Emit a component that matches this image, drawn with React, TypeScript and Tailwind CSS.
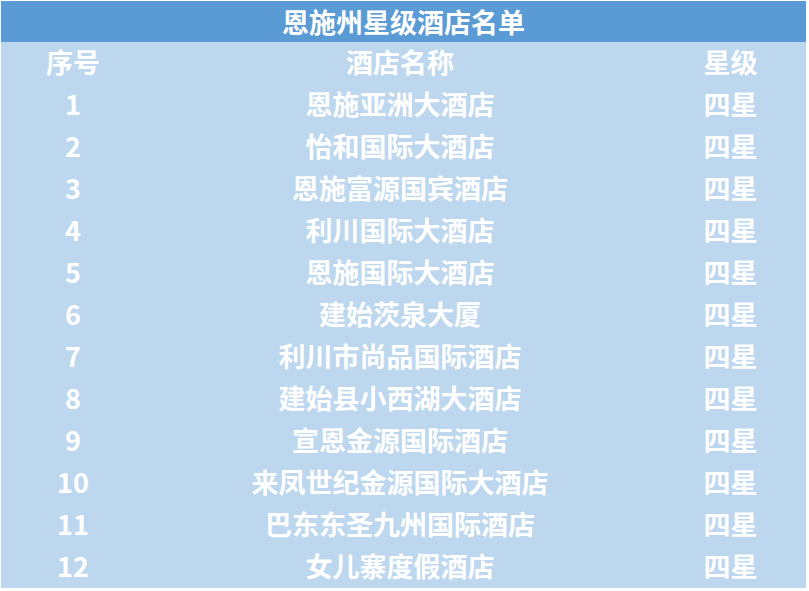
import React from 'react';

const hotels: string[] = [
    '恩施亚洲大酒店',
    '怡和国际大酒店',
    '恩施富源国宾酒店',
    '利川国际大酒店',
    '恩施国际大酒店',
    '建始茨泉大厦',
    '利川市尚品国际酒店',
    '建始县小西湖大酒店',
    '宣恩金源国际酒店',
    '来凤世纪金源国际大酒店',
    '巴东东圣九州国际酒店',
    '女儿寨度假酒店',
];

const App: React.FC = () => {
    return (
        <div className="w-[809px] h-[591px] bg-white pl-[1px] pt-[1px]">
            <div
                className="w-[805px] bg-[#bdd7ee] text-white font-bold text-[27px] leading-none"
                style={{fontFamily: '"Noto Sans CJK SC", "Noto Sans", sans-serif'}}
            >
                <div className="h-[41px] bg-[#5b9bd5] flex items-center justify-center">
                    恩施州星级酒店名单
                </div>
                <div className="grid grid-cols-[144px_510px_151px]">
                    <div className="h-[42px] pb-[4px] flex items-center justify-center">序号</div>
                    <div className="h-[42px] pb-[4px] flex items-center justify-center">酒店名称</div>
                    <div className="h-[42px] pb-[4px] flex items-center justify-center">星级</div>
                    {hotels.map((name, i) => (
                        <React.Fragment key={i}>
                            <div className="h-[42px] pb-[4px] flex items-center justify-center">{i + 1}</div>
                            <div className="h-[42px] pb-[4px] flex items-center justify-center">{name}</div>
                            <div className="h-[42px] pb-[4px] flex items-center justify-center">四星</div>
                        </React.Fragment>
                    ))}
                </div>
            </div>
        </div>
    );
};

export default App;
